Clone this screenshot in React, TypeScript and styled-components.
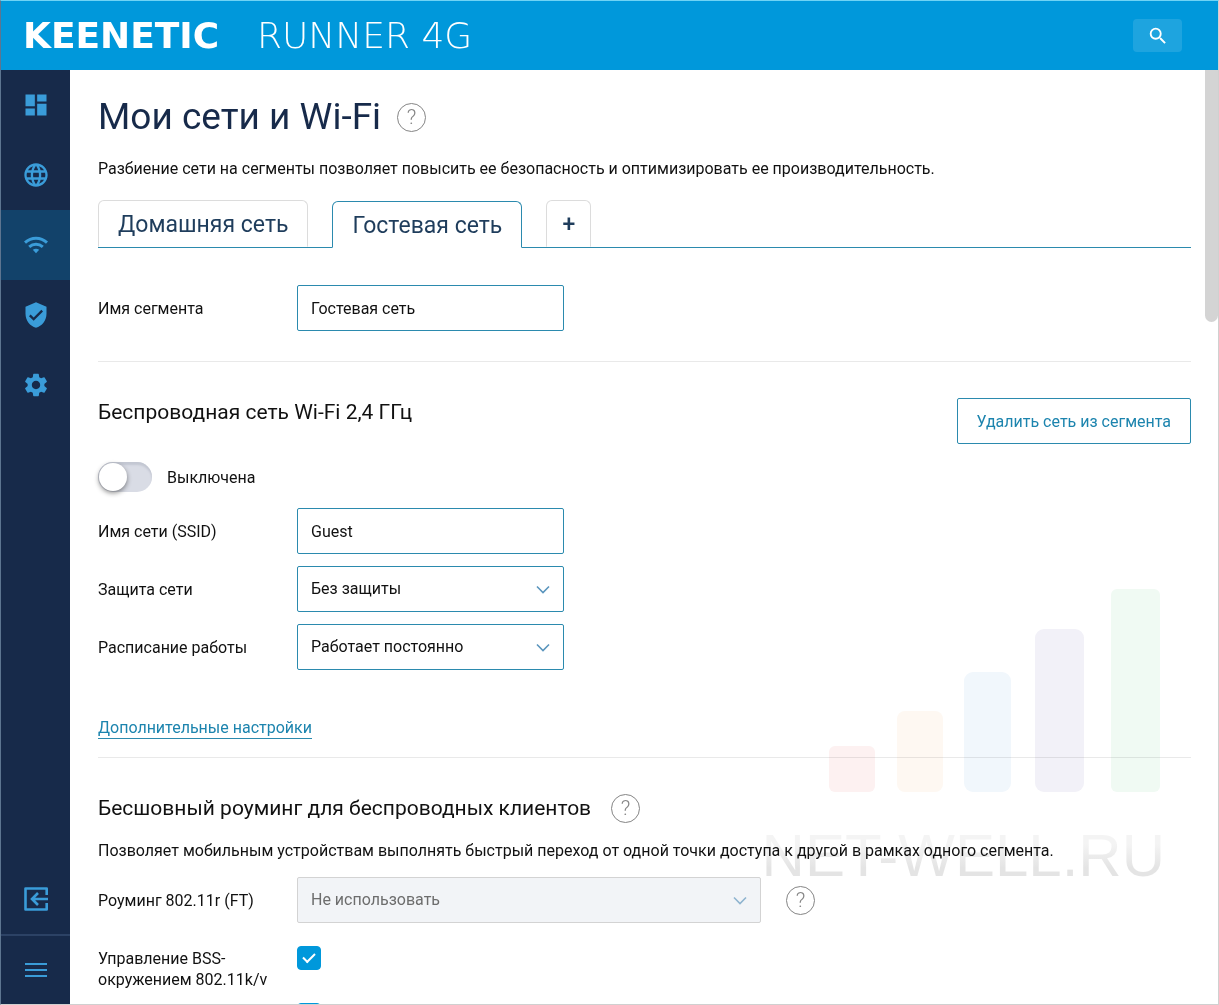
import React, { useState } from "react";
import styled, { createGlobalStyle } from "styled-components";
import {
  MdDashboard,
  MdLanguage,
  MdVerifiedUser,
  MdSettings,
  MdSearch,
} from "react-icons/md";

const color = {
  accent: "#0098db",
  line: "#2b8aae",
  link: "#1c84ae",
  navy: "#172a4a",
  navyActive: "#12426a",
  icon: "#3a9cd9",
  text: "#111111",
  rule: "#e9e9e9",
};

const GlobalStyle = createGlobalStyle`
  *, *::before, *::after { box-sizing: border-box; }
  body {
    margin: 0;
    font-family: Roboto, "Noto Sans", sans-serif;
    font-size: 16px;
    line-height: 21px;
    color: ${color.text};
    background: #fff;
  }
  button, input, select { font: inherit; color: inherit; }
`;

const Shell = styled.div`
  display: flex;
  flex-direction: column;
  height: 100vh;
  border: 1px solid;
  border-color: #6fd3f5 #d0d0d0 #d0d0d0 #5d7590;
`;

const Header = styled.header`
  display: flex;
  align-items: center;
  justify-content: space-between;
  flex: none;
  height: 69px;
  padding: 0 36px 0 22px;
  background: ${color.accent};
  color: #fff;
`;

const Brand = styled.div`
  display: flex;
  font-family: "DejaVu Sans", sans-serif;
  font-size: 36px;
  line-height: 40px;
`;

const BrandName = styled.span`
  min-width: 234px;
  font-weight: 700;
`;

const BrandModel = styled.span`
  font-weight: 200;
`;

const SearchButton = styled.button`
  display: grid;
  place-items: center;
  width: 49px;
  height: 33px;
  padding: 0;
  border: 0;
  border-radius: 4px;
  background: #1ea4df;
  color: #fff;
`;

const Body = styled.div`
  display: flex;
  flex: 1;
  min-height: 0;
`;

const Sidebar = styled.nav`
  display: flex;
  flex-direction: column;
  flex: none;
  width: 69px;
  background: ${color.navy};
`;

const NavLink = styled.a<{ $active?: boolean }>`
  display: grid;
  place-items: center;
  height: 70px;
  color: ${color.icon};
  background: ${(p) => (p.$active ? color.navyActive : "transparent")};
`;

const NavFooter = styled.div`
  margin-top: auto;
`;

const MenuButton = styled.button`
  display: grid;
  place-items: center;
  width: 100%;
  height: 70px;
  padding: 0;
  border: 0;
  border-top: 2px solid #2c4265;
  background: none;
  color: ${color.icon};
`;

const Viewport = styled.div`
  position: relative;
  display: flex;
  flex: 1;
  min-width: 0;
`;

const Main = styled.main`
  position: relative;
  flex: 1;
  min-width: 0;
  padding: 25px 14px 0 28px;
  overflow-y: auto;
  scrollbar-width: none;
`;

const ScrollTrack = styled.div`
  flex: none;
  width: 13px;
`;

const ScrollThumb = styled.div`
  height: 27%;
  border-radius: 0 0 7px 7px;
  background: #d4d4d4;
`;

const TitleRow = styled.div`
  display: flex;
  align-items: center;
  gap: 16px;
`;

const Title = styled.h1`
  margin: 0;
  font-size: 37px;
  line-height: 44px;
  font-weight: 400;
  color: #172a4a;
`;

const HelpButton = styled.button`
  display: grid;
  place-items: center;
  flex: none;
  width: 29px;
  height: 29px;
  padding: 0;
  border: 1px solid #858585;
  border-radius: 50%;
  background: none;
  color: #858585;
  font-size: 21px;
  line-height: 27px;
  font-weight: 300;
`;

const Lead = styled.p`
  margin: 19px 0 21px;
`;

const Tabs = styled.div`
  display: flex;
  align-items: flex-end;
  gap: 24px;
  height: 48px;
  border-bottom: 1px solid ${color.line};
`;

const Tab = styled.button<{ $active?: boolean }>`
  height: 47px;
  padding: 3px 19px 0;
  margin-bottom: ${(p) => (p.$active ? "-1px" : "0")};
  border: 1px solid ${(p) => (p.$active ? color.line : "#dcdcdc")};
  border-bottom-color: ${(p) => (p.$active ? "#fff" : "transparent")};
  border-radius: 6px 6px 0 0;
  background: #fff;
  color: #1f3d5c;
  font-size: 23px;
  line-height: 32px;
`;

const AddTab = styled(Tab)`
  width: 45px;
  padding: 3px 0 0;
  font-weight: 500;
`;

const Section = styled.section<{ $top: number; $bottom: number }>`
  padding: ${(p) => p.$top}px 0 ${(p) => p.$bottom}px;
  & + & { border-top: 1px solid ${color.rule}; }
`;

const Rows = styled.div`
  display: grid;
  gap: 12px;
`;

const Row = styled.div`
  display: grid;
  grid-template-columns: 175px auto;
  justify-content: start;
  align-items: center;
  column-gap: 24px;
`;

const CheckRows = styled.div`
  display: grid;
  gap: 13px;
  margin-top: 23px;
`;

const CheckRow = styled(Row)`
  align-items: start;
`;

const CheckLabel = styled.label`
  padding-top: 2px;
`;

const TextInput = styled.input`
  width: 267px;
  height: 46px;
  padding: 0 13px;
  border: 1px solid ${color.line};
  border-radius: 2px;
  background: #fff;
  outline: none;
`;

const SelectBox = styled.div<{ $wide?: boolean }>`
  display: grid;
  grid-template-columns: 1fr 42px;
  align-items: center;
  justify-items: center;
  width: ${(p) => (p.$wide ? 464 : 267)}px;
  color: ${(p) => (p.$wide ? "#8fb4cf" : "#5a95bd")};
  svg { grid-area: 1 / 2; pointer-events: none; z-index: 1; }
`;

const Select = styled.select`
  grid-area: 1 / 1 / 2 / 3;
  width: 100%;
  height: 46px;
  padding: 0 44px 2px 13px;
  border: 1px solid ${color.line};
  border-radius: 2px;
  background: #fff;
  color: ${color.text};
  appearance: none;
  &:disabled {
    border-color: #d3d3d3;
    background: #f2f4f7;
    color: #6d6d6d;
    opacity: 1;
  }
`;

const FieldWithHelp = styled.div`
  display: flex;
  align-items: center;
  gap: 25px;
`;

const SectionHead = styled.div`
  display: flex;
  align-items: flex-start;
  justify-content: space-between;
`;

const HeadingRow = styled.div`
  display: flex;
  align-items: center;
  gap: 20px;
`;

const Heading = styled.h2`
  margin: 0;
  font-size: 21px;
  line-height: 29px;
  font-weight: 400;
`;

const OutlineButton = styled.button`
  height: 46px;
  padding: 0 19px;
  border: 1px solid ${color.line};
  border-radius: 2px;
  background: #fff;
  color: ${color.link};
`;

const SwitchRow = styled.label`
  display: flex;
  align-items: center;
  gap: 15px;
  margin: 18px 0 16px;
`;

const Switch = styled.input`
  appearance: none;
  width: 54px;
  height: 30px;
  margin: 0;
  border-radius: 15px;
  background: #d9dce5;
  box-shadow: inset 0 3px 2px #c3c7d2;
  &::before {
    content: "";
    display: block;
    width: 28px;
    height: 28px;
    margin: 1px;
    border-radius: 50%;
    background: #fff;
    box-shadow: 0 2px 5px rgba(0, 0, 0, 0.45);
  }
  &:checked { background: ${color.accent}; box-shadow: none; }
  &:checked::before { margin-left: 25px; }
`;

const MoreLink = styled.a`
  display: inline-block;
  margin-top: 47px;
  border-bottom: 1px solid ${color.line};
  color: ${color.link};
  text-decoration: none;
`;

const Note = styled.p`
  margin: 17px 0 16px;
`;

const Checkbox = styled.input`
  appearance: none;
  display: grid;
  place-items: center;
  width: 24px;
  height: 24px;
  margin: 0;
  border: 1px solid ${color.accent};
  border-radius: 4px;
  &:checked { background: ${color.accent}; }
  &:checked::before {
    content: "";
    width: 12px;
    height: 7px;
    margin-bottom: 4px;
    border: solid #fff;
    border-width: 0 0 2px 2px;
    transform: rotate(-45deg);
  }
`;

const Watermark = styled.div`
  position: absolute;
  right: 53px;
  bottom: 124px;
  display: grid;
  justify-items: end;
  gap: 40px;
  pointer-events: none;
  user-select: none;
  mix-blend-mode: multiply;
`;

const WatermarkText = styled.span`
  font-family: "Liberation Sans", Arial, sans-serif;
  font-size: 60px;
  line-height: 48px;
  color: transparent;
  background: linear-gradient(#f4f4f4 25%, #e4e4e4 75%);
  background-clip: text;
`;

const bars = [
  { x: 0, w: 46, h: 46, rx: 6, fill: "#fdf1f1" },
  { x: 68, w: 46, h: 81, rx: 8, fill: "#fef8f2" },
  { x: 135, w: 47, h: 120, rx: 9, fill: "#f1f7fc" },
  { x: 206, w: 49, h: 163, rx: 9, fill: "#f2f1f8" },
  { x: 282, w: 49, h: 203, rx: 6, fill: "#f0faf3" },
];

const Bars = () => (
  <svg width="336" height="203" viewBox="0 0 336 203" aria-hidden="true">
    {bars.map((b) => (
      <rect key={b.x} x={b.x} y={203 - b.h} width={b.w} height={b.h} rx={b.rx} fill={b.fill} />
    ))}
  </svg>
);

const WifiIcon = () => (
  <svg width="24" height="18" viewBox="0 0 24 18" fill="none" stroke="currentColor" strokeWidth="3" aria-hidden="true">
    <path d="M1 6.700C7.400.9 16.600.9 23 6.700" />
    <path d="M5.200 10.800c4-3.500 9.600-3.500 13.600 0" />
    <path d="M8.800 13.800c2-1.500 4.400-1.500 6.400 0L12 17.200z" fill="currentColor" stroke="none" />
  </svg>
);

const ExitIcon = () => (
  <svg width="24" height="24" viewBox="0 0 24 24" fill="none" stroke="currentColor" strokeWidth="2.600" aria-hidden="true">
    <path d="M22.700 8V1.500H1.500v21h21.200V16" strokeLinejoin="round" />
    <path d="M24 12H8M14 6 8 12l6 6" />
  </svg>
);

const MenuIcon = () => (
  <svg width="22" height="16" viewBox="0 0 22 16" fill="currentColor" aria-hidden="true">
    <path d="M0 1h22v2H0zM0 7h22v2H0zM0 13h22v2H0z" shapeRendering="crispEdges" />
  </svg>
);

const Chevron = () => (
  <svg width="14" height="9" viewBox="0 0 14 9" fill="none" stroke="currentColor" strokeWidth="1.600" aria-hidden="true">
    <path d="M1 1.500 7 7.500 13 1.500" />
  </svg>
);

const Help = () => <HelpButton aria-label="Справка">?</HelpButton>;

function SelectField(props: { id: string; value: string; wide?: boolean; disabled?: boolean }) {
  return (
    <SelectBox $wide={props.wide}>
      <Select id={props.id} disabled={props.disabled}>
        <option>{props.value}</option>
      </Select>
      <Chevron />
    </SelectBox>
  );
}

export default function App() {
  const [segment, setSegment] = useState("Гостевая сеть");
  const [ssid, setSsid] = useState("Guest");
  return (
    <Shell>
      <GlobalStyle />
      <Header>
        <Brand>
          <BrandName>KEENETIC</BrandName>
          <BrandModel>RUNNER 4G</BrandModel>
        </Brand>
        <SearchButton aria-label="Поиск">
          <MdSearch size={22} />
        </SearchButton>
      </Header>
      <Body>
        <Sidebar>
          <NavLink href="#dashboard" aria-label="Системный монитор"><MdDashboard size={28} /></NavLink>
          <NavLink href="#internet" aria-label="Интернет"><MdLanguage size={28} /></NavLink>
          <NavLink href="#networks" aria-label="Мои сети и Wi-Fi" $active><WifiIcon /></NavLink>
          <NavLink href="#rules" aria-label="Сетевые правила"><MdVerifiedUser size={28} /></NavLink>
          <NavLink href="#settings" aria-label="Управление"><MdSettings size={28} /></NavLink>
          <NavFooter>
            <NavLink href="#logout" aria-label="Выход"><ExitIcon /></NavLink>
            <MenuButton aria-label="Меню"><MenuIcon /></MenuButton>
          </NavFooter>
        </Sidebar>
        <Viewport>
          <Main>
            <TitleRow>
              <Title>Мои сети и Wi-Fi</Title>
              <Help />
            </TitleRow>
            <Lead>Разбиение сети на сегменты позволяет повысить ее безопасность и оптимизировать ее производительность.</Lead>
            <Tabs role="tablist">
              <Tab role="tab" aria-selected={false}>Домашняя сеть</Tab>
              <Tab role="tab" aria-selected $active>Гостевая сеть</Tab>
              <AddTab aria-label="Добавить сегмент">+</AddTab>
            </Tabs>

            <Section $top={37} $bottom={30}>
              <Row>
                <label htmlFor="segment">Имя сегмента</label>
                <TextInput id="segment" value={segment} onChange={(e) => setSegment(e.target.value)} />
              </Row>
            </Section>

            <Section $top={36} $bottom={18}>
              <SectionHead>
                <Heading>Беспроводная сеть Wi-Fi 2,4 ГГц</Heading>
                <OutlineButton>Удалить сеть из сегмента</OutlineButton>
              </SectionHead>
              <SwitchRow>
                <Switch type="checkbox" role="switch" />
                Выключена
              </SwitchRow>
              <Rows>
                <Row>
                  <label htmlFor="ssid">Имя сети (SSID)</label>
                  <TextInput id="ssid" value={ssid} onChange={(e) => setSsid(e.target.value)} />
                </Row>
                <Row>
                  <label htmlFor="security">Защита сети</label>
                  <SelectField id="security" value="Без защиты" />
                </Row>
                <Row>
                  <label htmlFor="schedule">Расписание работы</label>
                  <SelectField id="schedule" value="Работает постоянно" />
                </Row>
              </Rows>
              <MoreLink href="#more">Дополнительные настройки</MoreLink>
            </Section>

            <Section $top={36} $bottom={24}>
              <HeadingRow>
                <Heading>Бесшовный роуминг для беспроводных клиентов</Heading>
                <Help />
              </HeadingRow>
              <Note>Позволяет мобильным устройствам выполнять быстрый переход от одной точки доступа к другой в рамках одного сегмента.</Note>
              <Row>
                <label htmlFor="roaming">Роуминг 802.11r (FT)</label>
                <FieldWithHelp>
                  <SelectField id="roaming" value="Не использовать" wide disabled />
                  <Help />
                </FieldWithHelp>
              </Row>
              <CheckRows>
                <CheckRow>
                  <CheckLabel htmlFor="bss">Управление BSS-окружением 802.11k/v</CheckLabel>
                  <Checkbox id="bss" type="checkbox" defaultChecked />
                </CheckRow>
                <CheckRow>
                  <span />
                  <Checkbox type="checkbox" aria-label="Band Steering" defaultChecked />
                </CheckRow>
              </CheckRows>
            </Section>
          </Main>
          <Watermark aria-hidden="true">
            <Bars />
            <WatermarkText>NET-WELL.RU</WatermarkText>
          </Watermark>
          <ScrollTrack>
            <ScrollThumb />
          </ScrollTrack>
        </Viewport>
      </Body>
    </Shell>
  );
}
